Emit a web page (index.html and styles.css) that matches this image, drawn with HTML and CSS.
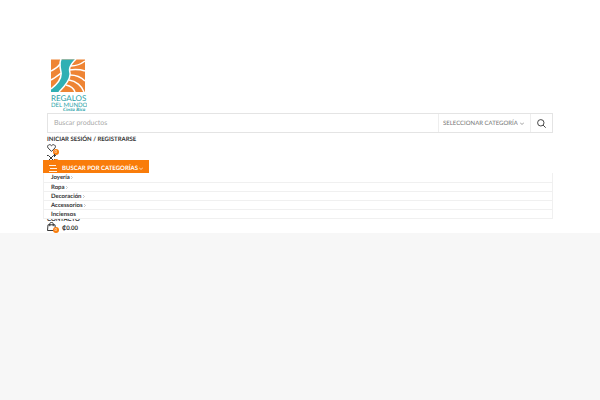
FILE: index.html
```
<!DOCTYPE html>
<html lang="es">
<head>
<meta charset="UTF-8">
<title>Regalos del Mundo Costa Rica</title>
<meta name="viewport" content="width=device-width, initial-scale=1.0">
<link rel="stylesheet" href="styles.css">
</head>
<body>

<header class="site-header">
    <a href="#" class="site-logo">
        <svg width="36" height="53" viewBox="0 0 36 53" role="img" aria-label="Regalos del Mundo">
            <rect x="0" y="0.5" width="34" height="32.5" fill="#ee8434"/>
            <path d="M10 0.5H25C18 7 18 10 19 14C20 20 15 26 8 33H0V30C8 24 11 19 10 13C9 8 8 4 10 0.5Z" fill="#2fb0b4"/>
            <g fill="none" stroke="#fff" stroke-width="1.5">
                <path d="M10 0C8 5 9 8 10 13C11 19 8 24 0 30"/>
                <path d="M25 0C18 7 18 10 19 14C20 20 15 26 8 33"/>
                <path d="M0 12C4 10 7 8 9 5M0 21C5 18 8 16 10 14"/>
                <path d="M20 7C25 7 30 5 34 2M18 11C26 10 31 11 34 12M19 16C26 16 31 19 34 22M18 21C25 22 31 27 33 33M15 26C20 27 23 30 24 33"/>
            </g>
            <text x="0" y="42" class="logo-name">REGALOS</text>
            <text x="0" y="48" class="logo-sub">DEL MUNDO</text>
            <text x="12" y="52" class="logo-country">Costa Rica</text>
        </svg>
    </a>

    <form class="search-form">
        <input type="text" class="search-input" placeholder="Buscar productos" aria-label="Buscar productos">
        <div class="search-cat">
            <select class="cat-select" aria-label="Categoría">
                <option>SELECCIONAR CATEGORÍA</option>
            </select>
            <svg class="chevron" width="4" height="3" viewBox="0 0 4 3"><path d="M0 0.5L2 2.5L4 0.5"/></svg>
        </div>
        <button type="submit" class="search-btn" aria-label="Buscar">
            <svg width="9" height="9" viewBox="0 0 9 9"><circle cx="3.8" cy="3.8" r="3.2"/><path d="M6.1 6.1L8.7 8.7"/></svg>
        </button>
    </form>

    <a href="#" class="header-link">INICIAR SESIÓN / REGISTRARSE</a>

    <a href="#" class="header-tool" aria-label="Lista de deseos">
        <svg width="9" height="8" viewBox="0 0 9 8"><path d="M4.5 7.4L1.1 4C-0.7 1.8 2.5-0.8 4.5 1.7C6.5-0.8 9.7 1.8 7.9 4Z"/></svg>
        <span class="badge">0</span>
    </a>
    <a href="#" class="header-tool tool-compare" aria-label="Comparar">
        <svg width="9" height="8" viewBox="0 0 9 8"><path d="M0 1.5H1.5L6.5 6.5H8.5M0 6.5H1.5L6.5 1.5H8.5M7 0L8.5 1.5L7 3M7 5L8.5 6.5L7 8"/></svg>
        <span class="badge">0</span>
    </a>

    <nav class="categories">
        <button type="button" class="cat-toggle">
            <svg class="burger" width="8" height="7" viewBox="0 0 8 7"><path d="M0 0.5H7M1 3.5H8M0 6.5H8"/></svg>
            BUSCAR POR CATEGORÍAS
            <svg class="chevron" width="4" height="3" viewBox="0 0 4 3"><path d="M0 0.5L2 2.5L4 0.5"/></svg>
        </button>
        <ul class="cat-menu">
            <li><a href="#">Joyería</a><svg class="arrow" width="2" height="3" viewBox="0 0 2 3"><path d="M0 0L1.5 1.5L0 3"/></svg></li>
            <li><a href="#">Ropa</a><svg class="arrow" width="2" height="3" viewBox="0 0 2 3"><path d="M0 0L1.5 1.5L0 3"/></svg></li>
            <li><a href="#">Decoración</a><svg class="arrow" width="2" height="3" viewBox="0 0 2 3"><path d="M0 0L1.5 1.5L0 3"/></svg></li>
            <li><a href="#">Accessorios</a><svg class="arrow" width="2" height="3" viewBox="0 0 2 3"><path d="M0 0L1.5 1.5L0 3"/></svg></li>
            <li><a href="#">Inciensos</a></li>
        </ul>
    </nav>

    <a href="#" class="header-link link-contact">CONTACTO</a>

    <a href="#" class="header-tool tool-cart">
        <svg width="9" height="9" viewBox="0 0 9 9"><path d="M1 2.8H8L8.5 8.5H0.5ZM2.8 4.2V1.5Q2.8 0.5 4.5 0.5Q6.2 0.5 6.2 1.5V4.2"/></svg>
        <span class="badge">0</span>
        <span class="cart-total">₡0.00</span>
    </a>
</header>

</body>
</html>
```
FILE: styles.css
```
* {
    box-sizing: border-box;
}

body {
    margin: 0;
    background-color: #f7f7f7;
    font-family: Lato, "Liberation Sans", sans-serif;
    font-size: 6px;
    line-height: 9px;
    color: #333;
    text-rendering: geometricPrecision;
}

input,
select,
button {
    text-rendering: inherit;
}

a {
    color: inherit;
    text-decoration: none;
}

svg {
    display: block;
    flex: none;
}

svg path,
.search-btn circle {
    stroke-linejoin: round;
}

.site-header {
    display: flex;
    flex-direction: column;
    align-items: flex-start;
    padding: 59px 47px 1px;
    background-color: #fff;
}

.site-logo {
    margin: 0 4px 1px;
}

.logo-name {
    font-size: 8px;
    fill: #2a9fa8;
}

.logo-sub {
    font-size: 6px;
    fill: #2a9fa8;
}

.logo-country {
    font-family: "Liberation Serif", serif;
    font-size: 5px;
    font-style: italic;
    font-weight: bold;
    fill: #2a9fa8;
}

/* search */
.search-form {
    display: flex;
    width: 100%;
    height: 20px;
    border: 1px solid #e4e4e4;
    margin-bottom: 2px;
}

.search-input {
    flex: 1;
    min-width: 0;
    border: none;
    padding: 0 6px;
    background: none;
    font: inherit;
    font-size: 7px;
    color: #333;
    outline: none;
}

.search-input::placeholder {
    color: #aaa;
}

.search-cat {
    display: flex;
    align-items: center;
    gap: 2px;
    padding: 0 6px 0 4px;
    border-left: 1px solid #eee;
}

.cat-select {
    appearance: none;
    border: none;
    padding: 0;
    background: none;
    font: inherit;
    color: #777;
}

.chevron {
    fill: none;
    stroke: currentColor;
    stroke-width: 0.7;
}

.search-cat .chevron {
    color: #777;
}

.search-btn {
    display: flex;
    align-items: center;
    justify-content: center;
    width: 22px;
    border: none;
    border-left: 1px solid #eee;
    padding: 0;
    background: none;
}

.search-btn svg {
    fill: none;
    stroke: #333;
    stroke-width: 0.9;
}

/* links and tools */
.header-link {
    font-weight: bold;
}

.header-tool {
    position: relative;
    display: flex;
    align-items: flex-start;
    height: 9px;
}

.header-tool svg {
    fill: none;
    stroke: #222;
    stroke-width: 0.9;
}

.tool-compare {
    margin-top: 1px;
}

.badge {
    position: absolute;
    left: 6px;
    top: 5px;
    width: 6px;
    height: 6px;
    border-radius: 50%;
    background-color: #f97c0a;
    color: #fff;
    font-size: 4px;
    line-height: 6px;
    text-align: center;
}

/* categories */
.categories {
    position: relative;
    z-index: 2;
    align-self: stretch;
    margin: -3px 0 0 -4px;
}

.cat-toggle {
    display: flex;
    align-items: center;
    width: 106px;
    height: 13px;
    border: none;
    padding: 3px 6px 0;
    background-color: #f97c0a;
    color: #fff;
    font: inherit;
    font-weight: bold;
}

.burger {
    margin-right: 5px;
    fill: none;
    stroke: #fff;
    stroke-width: 0.9;
}

.cat-toggle .chevron {
    margin-left: auto;
}

.cat-menu {
    margin: 0;
    padding: 0;
    list-style: none;
    background-color: #fff;
    border: 1px solid #f0f0f0;
    border-top: none;
}

.cat-menu li {
    display: flex;
    align-items: center;
    height: 9px;
    padding-left: 7px;
    font-weight: bold;
}

.cat-menu li + li {
    border-top: 1px solid #f0f0f0;
}

.arrow {
    margin-left: 1px;
    fill: none;
    stroke: #aaa;
    stroke-width: 0.6;
}

.link-contact {
    margin-top: -4px;
}

.tool-cart {
    margin-top: -2px;
    height: 10px;
}

.cart-total {
    margin-left: 6px;
    padding-top: 2px;
    font-weight: bold;
}
```
